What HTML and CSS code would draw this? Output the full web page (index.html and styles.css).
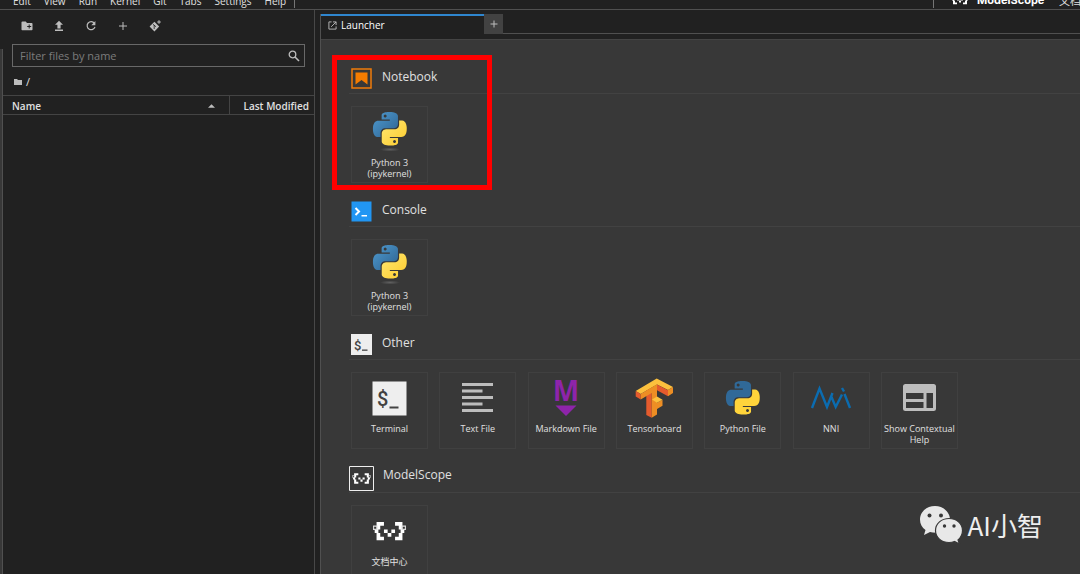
FILE: index.html
```html
<!DOCTYPE html>
<html lang="en">
<head>
<meta charset="utf-8">
<title>Launcher</title>
<link rel="stylesheet" href="styles.css">
</head>
<body>
<svg class="defs" aria-hidden="true">
  <defs>
    <linearGradient id="blue" x1="0" y1="0" x2="1" y2="1"><stop offset="0" stop-color="#4f9bd0"/><stop offset="1" stop-color="#2d618f"/></linearGradient>
    <linearGradient id="gold" x1="0" y1="0" x2="1" y2="1"><stop offset="0" stop-color="#ffe873"/><stop offset="1" stop-color="#fdcb2c"/></linearGradient>
    <radialGradient id="shade"><stop offset="0" stop-color="#606060"/><stop offset="1" stop-color="#606060" stop-opacity="0"/></radialGradient>
    <path id="py-top" d="M14.25.18l.9.2.73.26.59.3.45.32.34.34.25.34.16.33.1.3.04.26.02.2-.01.13V8.5l-.05.63-.13.55-.21.46-.26.38-.3.31-.33.25-.35.19-.35.14-.33.1-.3.07-.26.04-.21.02H8.77l-.69.05-.59.14-.5.22-.41.27-.33.32-.27.35-.2.36-.15.37-.1.35-.07.32-.04.27-.02.21v3.06H3.17l-.21-.03-.28-.07-.32-.12-.35-.18-.36-.26-.36-.36-.35-.46-.32-.59-.28-.73-.21-.88-.14-1.05-.05-1.23.06-1.22.16-1.04.24-.87.32-.71.36-.57.4-.44.42-.33.42-.24.4-.16.36-.1.32-.05.24-.01h.16l.06.01h8.16v-.83H6.18l-.01-2.75-.02-.37.05-.34.11-.31.17-.28.25-.26.31-.23.38-.2.44-.18.51-.15.58-.12.64-.1.71-.06.77-.04.84-.02 1.27.05zm-6.3 1.98l-.23.33-.08.41.08.41.23.34.33.22.41.09.41-.09.33-.22.23-.34.08-.41-.08-.41-.23-.33-.33-.22-.41-.09-.41.09z"/>
    <path id="py-bottom" d="M21.1 6.11l.28.06.32.12.35.18.36.27.36.35.35.47.32.59.28.73.21.88.14 1.04.05 1.23-.06 1.23-.16 1.04-.24.86-.32.71-.36.57-.4.45-.42.33-.42.24-.4.16-.36.09-.32.05-.24.02-.16-.01h-8.22v.82h5.84l.01 2.76.02.36-.05.34-.11.31-.17.29-.25.25-.31.24-.38.2-.44.17-.51.15-.58.13-.64.09-.71.07-.77.04-.84.01-1.27-.04-1.07-.14-.9-.2-.73-.25-.59-.3-.45-.33-.34-.34-.25-.34-.16-.33-.1-.3-.04-.25-.02-.2.01-.13v-5.34l.05-.64.13-.54.21-.46.26-.38.3-.32.33-.24.35-.2.35-.14.33-.1.3-.06.26-.04.21-.02.13-.01h5.84l.69-.05.59-.14.5-.21.41-.28.33-.32.27-.35.2-.36.15-.36.1-.35.07-.32.04-.28.02-.21V6.07h2.09l.14.01zm-6.47 14.25l-.23.33-.08.41.08.41.23.33.33.23.41.08.41-.08.33-.23.23-.33.08-.41-.08-.41-.23-.33-.33-.23-.41-.08-.41.08z"/>
    <symbol id="kernel" viewBox="1 1 75 50">
      <ellipse cx="39" cy="43.5" rx="10" ry="2" fill="url(#shade)"/>
      <g transform="translate(22 6) scale(1.4)"><use href="#py-top" fill="url(#blue)"/><use href="#py-bottom" fill="url(#gold)"/></g>
    </symbol>
    <symbol id="scope" viewBox="0 0 9 5">
      <path fill="#fff" d="M1 0h2v1H2v1h-.5v1H2v1h1v1H1V3H.5V2H1zM8 0H6v1h1v1h.5v1H7v1H6v1h2V3h.5V2H8zM3 2h1v1H3zM5 2h1v1H5zM4 3h1v1H4z"/>
      <path fill="none" stroke="#ddd" stroke-width=".3" d="M.2 1.1h.9v.9H.2zM7.900 1.100h.9v.9h-.9z"/>
    </symbol>
  </defs>
</svg>
<div class="app">
  <header class="topbar">
    <nav class="menu" aria-label="Menu">
      <button>Edit</button><button>View</button><button>Run</button><button>Kernel</button><button>Git</button><button>Tabs</button><button>Settings</button><button>Help</button>
    </nav>
    <div class="brand">
      <svg class="brand-mark" viewBox="0 0 9 5"><use href="#scope" width="9" height="5"/></svg>
      <span class="brand-name">ModelScope</span>
      <a class="brand-link" href="#">文档中心</a>
    </div>
  </header>
  <div class="workspace">
    <div class="rail"></div>
    <aside class="files">
      <div class="tools">
        <button aria-label="New folder"><svg viewBox="0 0 12 12"><path fill="#bdbdbd" d="M1.5 1.5h3.200L6 3h4.700q.8 0 .8.8v5.700q0 .8-.8.8H1.300q-.8 0-.8-.8V2.300q0-.8 1-.8z"/><path stroke="#212121" d="M8.200 4.500v4M6.200 6.500h4"/></svg></button>
        <button aria-label="Upload"><svg viewBox="0 0 12 12"><path fill="#bdbdbd" d="M6 .8l4 4H7.600v3.700H4.400V4.800H2zM2 9.500h8v1.400H2z"/></svg></button>
        <button aria-label="Refresh"><svg viewBox="0 0 12 12"><path d="M9.400 3.300A4 4 0 1 0 10 6.800" fill="none" stroke="#bdbdbd" stroke-width="1.200"/><path fill="#bdbdbd" d="M10.400 1v4.200H6.300z"/></svg></button>
        <button aria-label="New launcher"><svg viewBox="0 0 12 12"><path stroke="#bdbdbd" d="M6 2v8M2 6h8"/></svg></button>
        <button aria-label="Git clone"><svg viewBox="0 0 12 12"><path fill="#bdbdbd" d="M5.400 1.800l4.800 4.800-4.800 4.800L.6 6.600z"/><path d="M4 4.200l3 2.600M5.200 5v4" stroke="#212121" stroke-width=".8"/><path d="M10 .2v3.600M8.200 2h3.600" stroke="#bdbdbd"/></svg></button>
      </div>
      <div class="search">
        <input type="text" placeholder="Filter files by name" aria-label="Filter files by name">
        <svg viewBox="0 0 12 12"><circle cx="4.500" cy="4.500" r="3.300" fill="none" stroke="#bdbdbd" stroke-width="1.300"/><path d="M7 7l4 4" stroke="#bdbdbd" stroke-width="1.600"/></svg>
      </div>
      <div class="crumbs">
        <svg viewBox="0 0 8 8"><path fill="#bdbdbd" d="M0 1h3l1 1h4v5H0z"/></svg><span>/</span>
      </div>
      <table class="listing">
        <thead><tr><th class="name">Name<svg viewBox="0 0 8 4"><path fill="#bdbdbd" d="M4 0l4 4H0z"/></svg></th><th class="modified">Last Modified</th></tr></thead>
      </table>
    </aside>
    <main class="dock">
      <div class="tabs">
        <div class="tab"><svg viewBox="0 0 10 10"><path d="M4 1H1v8h8V6M5.500 1H9v3.500M9 1L3.500 6.500" fill="none" stroke="#bdbdbd"/></svg><span>Launcher</span></div>
        <div class="tab-rest"><button aria-label="New tab"><svg viewBox="0 0 10 10"><path d="M5 1.500v7M1.500 5h7" stroke="#bdbdbd"/></svg></button></div>
      </div>
      <div class="launcher">
        <section>
          <h2><svg viewBox="0 0 21 21"><path d="M1 1h19v19H1z" fill="none" stroke="#ef7b0a" stroke-width="1.500"/><path fill="#f57c00" d="M4.500 4.500h12v12l-6-4.500-6 4.500z"/></svg>Notebook</h2>
          <div class="cards"><button class="card"><svg viewBox="1 1 75 50"><use href="#kernel" x="1" y="1" width="75" height="50"/></svg><span>Python 3<br>(ipykernel)</span></button></div>
        </section>
        <section>
          <h2><svg viewBox="0 0 21 21"><path fill="#2196f3" d="M.5.500h20v20H.5z"/><path d="M4.500 7l3.500 3.500L4.500 14" fill="none" stroke="#fff" stroke-width="2"/><path fill="#fff" d="M10.500 14h5.500v1.500h-5.500z"/></svg>Console</h2>
          <div class="cards"><button class="card"><svg viewBox="1 1 75 50"><use href="#kernel" x="1" y="1" width="75" height="50"/></svg><span>Python 3<br>(ipykernel)</span></button></div>
        </section>
        <section>
          <h2><svg viewBox="0 0 21 21"><path fill="#eee" d="M0 0h21v21H0z"/><text class="dollar" x="3" y="15.500" font-size="13">$</text><path fill="#424242" d="M11 15.500h5.500v1.300H11z"/></svg>Other</h2>
          <div class="cards">
            <button class="card"><svg viewBox="1 1 75 50"><path fill="#eee" d="M21.500 9.500h34v34h-34z"/><text class="dollar" x="26" y="34" font-size="20">$</text><path fill="#424242" d="M38.500 34.500h9v2h-9z"/></svg><span>Terminal</span></button>
            <button class="card"><svg viewBox="1 1 75 50"><path stroke="#bdbdbd" stroke-width="3" d="M23 12.500h31M23 19h20.500M23 25.500h31M23 32h20.500M23 38.500h31"/></svg><span>Text File</span></button>
            <button class="card"><svg viewBox="1 1 75 50"><text class="mark" x="38" y="29">M</text><path fill="#8e24aa" d="M27.500 33.500h21L38 44z"/></svg><span>Markdown File</span></button>
            <button class="card"><svg viewBox="1 1 75 50">
              <path fill="#fcc03d" d="M19.700 19L40.700 6.500 57 15l-5 3-11-5.500L24.700 22z"/>
              <path fill="#e55b2d" d="M19.700 19l5 3v5.500l-5-3zM30.300 18.800l5.400-3.100v30.100l-5.400-2.800zM41 12.500l11 5.800v6l-11-6z"/>
              <path fill="#ed8e24" d="M24.700 22L41 12.300v30.200l-5.300 3.300V21l-11 6.500zM52 18l5-3v6l-5 3.300zM41 30.800l5.500-3v6L41 37z"/>
              <path fill="#fcc03d" d="M36 27.500l5-3 5.500 3.300-5.500 3z"/></svg><span>Tensorboard</span></button>
            <button class="card"><svg viewBox="1 1 75 50"><g transform="translate(22 9) scale(1.4)"><use href="#py-top" fill="#306998"/><use href="#py-bottom" fill="#ffd43b"/></g></svg><span>Python File</span></button>
            <button class="card"><svg viewBox="1 1 75 50"><path d="M19 36l7.500-19.500L34 35l5.500-14M38.500 25l4.200 10L49 22.500M49 16l2 3.500M51.500 22L57 36" fill="none" stroke="#0b6cb0" stroke-width="2.400"/></svg><span>NNI</span></button>
            <button class="card"><svg viewBox="1 1 75 50"><path fill="#bdbdbd" fill-rule="evenodd" d="M24.500 12h28q2.500 0 2.500 2.500v22q0 2.500-2.500 2.500h-28q-2.500 0-2.500-2.500v-22q0-2.500 2.500-2.500zM25 21v6h17.500v-6zM25 30v6h17.500v-6zM45.500 21v15H52V21z"/></svg><span>Show Contextual Help</span></button>
          </div>
        </section>
        <section>
          <h2 class="wide"><svg viewBox="0 0 25 25"><path d="M.5.500h24v24H.5z" fill="none" stroke="#eee"/><use href="#scope" x="3" y="7" width="19" height="11"/></svg>ModelScope</h2>
          <div class="cards"><button class="card"><svg viewBox="1 1 75 50"><use href="#scope" x="21.500" y="17" width="34" height="18.500"/></svg><span>文档中心</span></button></div>
        </section>
      </div>
    </main>
  </div>
  <div class="highlight"></div>
  <div class="watermark">
    <svg viewBox="0 0 43 38"><path fill="#e8e8e8" d="M15 0C6.500 0 0 6 0 13.500c0 4.500 2 8 5.500 10.500L4 29l6-3q2.500.8 6 .8C24 26.500 30 20.500 30 13.500S23.500 0 15 0z"/><path fill="#e8e8e8" stroke="#383838" stroke-width="1.200" d="M29 12.500c-7.500 0-13.500 5-13.500 12s6 12 13.500 12q3 0 5.500-1l5 2.500-1.500-4c3-2.500 4.500-5.500 4.500-9.500 0-7-6-12-13.500-12z"/><g fill="#383838"><circle cx="9.500" cy="9.500" r="2"/><circle cx="21" cy="9.500" r="2"/><circle cx="24.500" cy="20" r="1.700"/><circle cx="34" cy="20" r="1.700"/></g></svg>
    <span>AI小智</span>
  </div>
</div>
</body>
</html>
```
FILE: styles.css
```css
* { box-sizing: border-box; }
body { margin: 0; background: #212121; }
button { margin: 0; padding: 0; border: 0; background: none; color: inherit; font: inherit; }
svg { display: block; flex: none; }
.defs { position: absolute; width: 0; height: 0; }
.app {
  position: relative; display: flex; flex-direction: column; height: 100vh; overflow: hidden;
  color: #e0e0e0; font: 10px/14px "Open Sans", "Noto Sans CJK SC", sans-serif;
}

.topbar { display: flex; justify-content: space-between; height: 10px; overflow: hidden; border-bottom: 1px solid #505050; }
.menu { display: flex; align-items: flex-end; gap: 13px; padding: 0 8px 0 13px; border-right: 1px solid #757575; height: 8px; }
.brand { display: flex; align-items: flex-end; width: 147px; height: 8px; padding-left: 17px; border-left: 1px solid #757575; }
.brand-mark { width: 18px; height: 11px; margin: 0 8px 3px 0; }
.brand-name { font: bold 11px/15px Inter, sans-serif; color: #fff; width: 82px; flex: none; }
.brand-link { flex: none; color: inherit; text-decoration: none; font-size: 11px; }

.workspace { display: flex; flex: 1; min-height: 0; }
.rail { width: 3px; margin-top: 39px; background: #383838; border-right: 1px solid #505050; }
.files { flex: 0 0 312px; border-right: 1px solid #484848; }
.tools { display: flex; gap: 20px; padding: 10px 18px 0; height: 34px; }
.tools button { width: 12px; height: 12px; }
.search { display: flex; align-items: center; height: 23px; margin: 0 9px; padding: 0 4px 0 7px; border: 1px solid #686868; }
.search input { flex: 1; min-width: 0; padding: 0; border: 0; outline: 0; background: none; color: #e0e0e0; font: 11px/15px "Open Sans", sans-serif; }
.search input::placeholder { color: #7c7c7c; opacity: 1; }
.search svg { width: 12px; height: 12px; }
.crumbs { display: flex; align-items: center; gap: 4px; height: 28px; padding: 2px 11px 0; font-size: 11px; }
.crumbs svg { width: 8px; height: 8px; }
.listing { width: 100%; border-collapse: collapse; table-layout: fixed; }
.listing th { height: 19px; padding: 2px 9px 0; border: solid #444; border-width: 1px 0; text-align: left; font-weight: 600; line-height: 16px; }
.listing .name svg { float: right; width: 7px; height: 4px; margin: 6px 5px 0 0; }
.listing .modified { width: 85px; padding: 2px 0 0 14px; border-left-width: 1px; white-space: nowrap; }

.dock { flex: 1; min-width: 0; display: flex; flex-direction: column; margin: 4px 0 0 5px; border-left: 1px solid #505050; }
.tabs { display: flex; height: 26px; border-bottom: 1px solid #444; }
.tab { display: flex; align-items: center; gap: 4px; width: 163px; padding: 0 7px 5px; border-top: 2px solid #2f86cf; color: #fff; }
.tab svg { width: 9px; height: 9px; }
.tab-rest { flex: 1; height: 20px; border-bottom: 1px solid #505050; }
.tab-rest button { display: grid; place-items: center; width: 19px; height: 20px; background: #424242; }
.tab-rest svg { width: 10px; height: 10px; }

.launcher { flex: 1; min-height: 0; overflow: hidden; padding: 22px 0 0 28px; background: #383838; }
h2 { display: flex; align-items: flex-start; gap: 10px; height: 32px; margin: 0 0 12px; padding: 6px 0 0 2px; border-bottom: 1px solid #424242; font-size: 12px; line-height: 17px; font-weight: 400; }
h2 svg { width: 21px; height: 21px; }
h2.wide { gap: 9px; padding: 5px 0 0; }
h2.wide svg { width: 25px; height: 25px; }
.cards { display: grid; grid-template-columns: repeat(7, 77px); justify-content: space-between; max-width: 609px; margin-bottom: 12px; padding-left: 2px; }
.card { display: flex; flex-direction: column; align-items: center; height: 77px; border: 1px solid #404040; font-size: 9px; line-height: 11px; }
.card svg { width: 75px; height: 50px; }
.dollar { fill: #424242; font-family: Roboto, sans-serif; font-weight: 500; }
.mark { fill: #8e24aa; font: bold 28px "Open Sans", sans-serif; text-anchor: middle; }

.highlight { position: absolute; left: 332px; top: 55px; width: 160px; height: 135px; border: 5px solid #f00; }
.watermark { position: absolute; right: 37px; bottom: 30px; display: flex; align-items: center; gap: 5px; color: #eee; font: 26px/36px "Noto Sans CJK SC", sans-serif; }
.watermark svg { width: 43px; height: 38px; }
```
